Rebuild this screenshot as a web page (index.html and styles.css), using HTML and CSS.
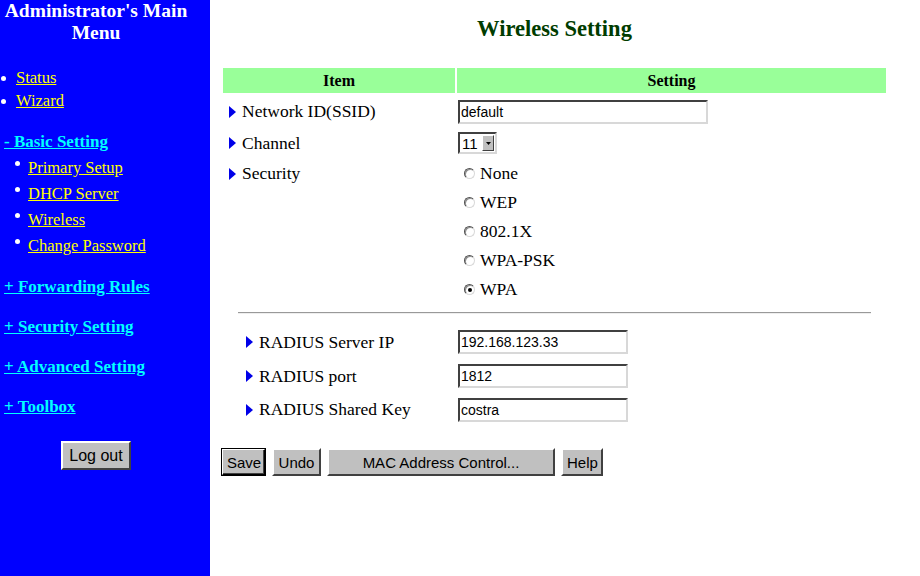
FILE: index.html
```html
<!DOCTYPE html>
<html lang="en">
<head>
    <meta charset="UTF-8">
    <title>Wireless Setting</title>
    <link rel="stylesheet" href="styles.css">
</head>
<body>
<div class="page">
    <div class="sidebar">
        <div class="menu">
            <h1 class="menu-title">Administrator's Main<br>Menu</h1>
            <ul class="top-links">
                <li><span class="dot"></span><a href="#">Status</a></li>
                <li><span class="dot"></span><a href="#">Wizard</a></li>
            </ul>
            <a class="group open" href="#">- Basic Setting</a>
            <ul class="sub-links">
                <li><span class="dot"></span><a href="#">Primary Setup</a></li>
                <li><span class="dot"></span><a href="#">DHCP Server</a></li>
                <li><span class="dot"></span><a href="#">Wireless</a></li>
                <li><span class="dot"></span><a href="#">Change Password</a></li>
            </ul>
            <div class="groups">
                <a class="group" href="#">+ Forwarding Rules</a>
                <a class="group" href="#">+ Security Setting</a>
                <a class="group" href="#">+ Advanced Setting</a>
                <a class="group" href="#">+ Toolbox</a>
            </div>
            <div class="logout-row"><button class="btn logout">Log out</button></div>
        </div>
    </div>

    <div class="content">
        <h2 class="page-title">Wireless Setting</h2>
        <div class="form-grid">
            <div class="head">Item</div>
            <div class="head">Setting</div>

            <div class="item r1"><svg class="arrow" width="7" height="12" viewBox="0 0 7 12"><polygon points="0,0 7,6 0,12"/></svg><span class="label">Network ID(SSID)</span></div>
            <div class="setting r1"><span class="field ssid">default</span></div>

            <div class="item r2"><svg class="arrow" width="7" height="12" viewBox="0 0 7 12"><polygon points="0,0 7,6 0,12"/></svg><span class="label">Channel</span></div>
            <div class="setting r2">
                <span class="select"><span class="select-val">11</span><span class="select-btn"><svg width="5" height="3" viewBox="0 0 5 3"><polygon points="0,0 5,0 2.5,3"/></svg></span></span>
            </div>

            <div class="item sec"><svg class="arrow" width="7" height="12" viewBox="0 0 7 12"><polygon points="0,0 7,6 0,12"/></svg><span class="label">Security</span></div>
            <div class="setting radios">
                <div class="opt"><span class="radio"></span><span class="label">None</span></div>
                <div class="opt"><span class="radio"></span><span class="label">WEP</span></div>
                <div class="opt"><span class="radio"></span><span class="label">802.1X</span></div>
                <div class="opt"><span class="radio"></span><span class="label">WPA-PSK</span></div>
                <div class="opt"><span class="radio on"></span><span class="label">WPA</span></div>
            </div>

            <div class="rule"></div>

            <div class="item sub"><svg class="arrow" width="7" height="12" viewBox="0 0 7 12"><polygon points="0,0 7,6 0,12"/></svg><span class="label">RADIUS Server IP</span></div>
            <div class="setting sub"><span class="field short">192.168.123.33</span></div>

            <div class="item sub"><svg class="arrow" width="7" height="12" viewBox="0 0 7 12"><polygon points="0,0 7,6 0,12"/></svg><span class="label">RADIUS port</span></div>
            <div class="setting sub"><span class="field short">1812</span></div>

            <div class="item sub last"><svg class="arrow" width="7" height="12" viewBox="0 0 7 12"><polygon points="0,0 7,6 0,12"/></svg><span class="label">RADIUS Shared Key</span></div>
            <div class="setting sub last"><span class="field short">costra</span></div>
        </div>

        <div class="actions">
            <button class="btn save">Save</button>
            <button class="btn undo">Undo</button>
            <button class="btn mac">MAC Address Control...</button>
            <button class="btn help">Help</button>
        </div>
    </div>
</div>
</body>
</html>
```

FILE: styles.css
```css
* { box-sizing: border-box; margin: 0; padding: 0; }
body { background: #fff; font-family: "Liberation Serif", "Times New Roman", serif; font-size: 16px; color: #000; height: 100vh; overflow: hidden; }
.page { display: flex; height: 100%; }

/* left menu */
.sidebar { width: 210px; flex: none; background: #0000ff; height: 100%; }
.menu { width: 192px; }
.menu-title { color: #fff; font-size: 19.5px; font-weight: bold; text-align: center; line-height: 22px; }
.menu ul { list-style: none; }
.menu a { color: #ffff00; text-decoration: underline; font-size: 16.5px; }
.top-links { margin-top: 22px; }
.top-links li { display: flex; align-items: center; height: 23px; line-height: 23px; }
.top-links .dot { margin: 2px 10px 0 1px; }
.dot { display: inline-block; width: 5px; height: 5px; border-radius: 50%; background: #fff; flex: none; }
.menu .group { display: block; color: #00ffff; font-weight: bold; font-size: 17px; padding-left: 4px; }
.menu .group.open { margin-top: 17px; line-height: 26px; }
.sub-links li { display: flex; height: 26px; line-height: 26px; padding-left: 15px; }
.sub-links .dot { margin: 6px 8px 0 0; }
.groups { margin-top: 8px; }
.groups .group { line-height: 40px; height: 40px; }
.logout-row { display: flex; justify-content: center; margin-top: 14px; }

/* buttons */
.btn { font-family: "Liberation Sans", Arial, sans-serif; font-size: 15px; color: #000; background: #c0c0c0; border: 2px solid; border-color: #fff #404040 #404040 #fff; height: 28px; padding: 0 4px; }
.logout { width: 70px; height: 29px; font-size: 16px; }

/* main content */
.content { padding-left: 13px; }
.page-title { width: 663px; text-align: center; color: #003c00; font-family: "Liberation Serif", serif; font-size: 22.5px; font-weight: bold; line-height: 26px; margin-top: 16px; margin-bottom: 26px; }
.form-grid { display: grid; width: 663px; grid-template-columns: 232px 429px; column-gap: 2px; }
.head { background: #99ff99; height: 25px; line-height: 25px; text-align: center; font-weight: bold; font-family: "Liberation Serif", serif; }
.label { font-family: "Liberation Serif", "Times New Roman", serif; font-size: 17.5px; white-space: nowrap; }
.item { display: flex; align-items: center; padding-left: 6px; }
.arrow { fill: #0000e8; margin-right: 6px; flex: none; }
.setting { display: flex; align-items: center; padding-left: 1px; }
.r1 { height: 34px; padding-top: 3px; }
.r2 { height: 32px; }
.item.sec { height: 29px; }
.radios { flex-direction: column; align-items: flex-start; }
.opt { display: flex; align-items: center; height: 29px; padding-left: 6px; }
.radio { flex: none; width: 11px; height: 11px; border-radius: 50%; border: 1px solid; border-color: #505050 #d8d8d8 #d8d8d8 #505050; box-shadow: inset 1px 1px 0 #909090; margin-right: 5px; position: relative; background: #fff; }
.radio.on::after { content: ""; position: absolute; left: 3px; top: 3px; width: 4px; height: 4px; border-radius: 50%; background: #000; }
.rule { grid-column: 1 / -1; margin: 8px 15px 11px; border-top: 1px solid #999; border-bottom: 1px solid #eee; }
.item.sub { padding-left: 23px; height: 34px; }
.setting.sub { height: 34px; }
.sub.last { height: 33px; }

/* text boxes */
.field { display: block; height: 24px; line-height: 20px; padding-left: 1px; border: 2px solid; border-color: #404040 #d8d8d8 #d8d8d8 #404040; font-family: "Liberation Sans", Arial, sans-serif; font-size: 14px; background: #fff; }
.ssid { width: 250px; }
.short { width: 170px; }
.select { display: flex; align-items: center; width: 39px; height: 22px; border: 2px solid; border-color: #404040 #d8d8d8 #d8d8d8 #404040; font-family: "Liberation Sans", Arial, sans-serif; font-size: 15px; }
.select-val { padding-left: 2px; width: 22px; }
.select-btn { display: flex; align-items: center; justify-content: center; width: 12px; height: 16px; background: #c0c0c0; border: 1px solid; border-color: #fff #404040 #404040 #fff; }
.select-btn svg { fill: #000; }

.actions { display: flex; gap: 6px; margin-top: 22px; margin-left: -2px; }
.save { width: 45px; border-color: #fff #000 #000 #fff; outline: 1px solid #000; outline-offset: -1px; box-shadow: inset -1px -1px #404040; }
.undo { width: 49px; }
.mac { width: 228px; }
.help { width: 42px; }
```
